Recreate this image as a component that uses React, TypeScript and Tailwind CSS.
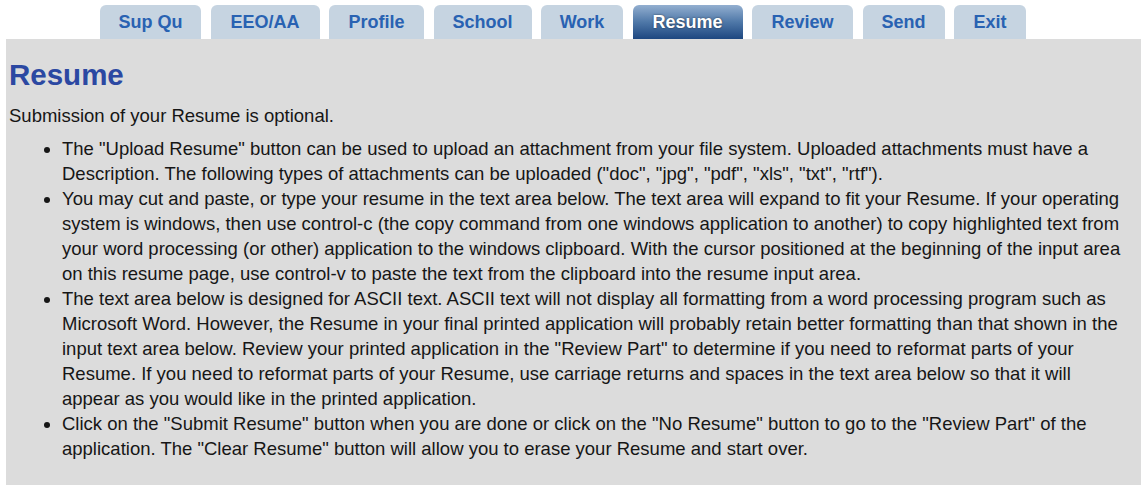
const tabs: [string, string][] = [
  ['Sup Qu', 'w-[101px]'],
  ['EEO/AA', 'w-[109px]'],
  ['Profile', 'w-[95px]'],
  ['School', 'w-[98px]'],
  ['Work', 'w-[82px]'],
  ['Resume', 'w-[110px]'],
  ['Review', 'w-[101px]'],
  ['Send', 'w-[82px]'],
  ['Exit', 'w-[72px]'],
];

const Tab = ({ label, width, active }: { label: string; width: string; active: boolean }) => (
  <div
    className={
      (active
        ? 'bg-gradient-to-b from-[#93afd0] via-[#4f78a8] to-[#1d4780] text-white [text-shadow:0_0_2px_rgba(0,0,0,0.6)] '
        : 'bg-[#c6d4e1] text-[#2962b2] ') +
      width +
      ' h-[34px] flex items-center justify-center rounded-t-[6px] font-bold text-[18px]'
    }
  >
    {label}
  </div>
);

export default function App() {
  return (
    <div className="min-h-[485px] bg-white font-['Liberation_Sans',Arial,sans-serif] text-[#161616]">
      {/* top tab strip */}
      <div className="flex gap-[9.5px] pl-[100px] pt-[5px]">
        {tabs.map(([t, w]) => (
          <Tab key={t} label={t} width={w} active={t === 'Resume'} />
        ))}
      </div>

      <div className="ml-[6px] bg-[#dcdcdc] pl-[3px] pr-[11px] pt-[18px] pb-[30px] min-h-[446px]">
        <h1 className="text-[29.5px] leading-[36px] font-bold text-[#2b48a2]">Resume</h1>
        <p className="text-[18.5px] leading-[25px] mt-[10px]">Submission of your Resume is optional.</p>
        <ul className="list-disc pl-[53px] mt-[8px] text-[18.5px] leading-[25px]">
          <li>
            The "Upload Resume" button can be used to upload an attachment from your file system. Uploaded attachments must
            have a Description. The following types of attachments can be uploaded ("doc", "jpg", "pdf", "xls", "txt", "rtf").
          </li>
          <li>
            You may cut and paste, or type your resume in the text area below. The text area will expand to fit your Resume.
            If your operating system is windows, then use control-c (the copy command from one windows application to another)
            to copy highlighted text from your word processing (or other) application to the windows clipboard. With the cursor
            positioned at the beginning of the input area on this resume page, use control-v to paste the text from the
            clipboard into the resume input area.
          </li>
          <li>
            The text area below is designed for ASCII text. ASCII text will not display all formatting from a word processing
            program such as Microsoft Word. However, the Resume in your final printed application will probably retain better
            formatting than that shown in the input text area below. Review your printed application in the "Review Part" to
            determine if you need to reformat parts of your Resume. If you need to reformat parts of your Resume, use carriage
            returns and spaces in the text area below so that it will appear as you would like in the printed application.
          </li>
          <li>
            Click on the "Submit Resume" button when you are done or click on the "No Resume" button to go to the "Review Part"
            of the application. The "Clear Resume" button will allow you to erase your Resume and start over.
          </li>
        </ul>
      </div>
    </div>
  );
}
